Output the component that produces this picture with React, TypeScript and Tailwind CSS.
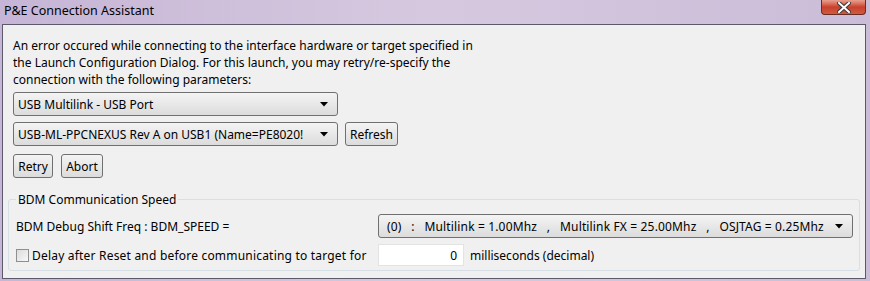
import React from "react";

const font = { fontFamily: '"Noto Sans", "Open Sans", sans-serif' };

function Caret() {
  return (
    <svg width="8" height="5" viewBox="0 0 8 5" className="shrink-0">
      <path d="M0 0 L8 0 L4 4.5 Z" fill="#000" />
    </svg>
  );
}

function Combo({ text, className }: { text: string; className: string }) {
  return (
    <div
      className={`flex items-center h-[24px] rounded-[3px] border border-[#707070] bg-gradient-to-b from-[#f4f4f4] to-[#dcdcdc] pl-[4px] pr-[9px] ${className}`}
    >
      <span className="flex-1 whitespace-pre overflow-hidden text-clip">{text}</span>
      <Caret />
    </div>
  );
}

function Btn({ text, className }: { text: string; className: string }) {
  return (
    <div
      className={`flex items-center justify-center h-[24px] rounded-[3px] border border-[#707070] bg-gradient-to-b from-[#f4f4f4] to-[#dcdcdc] ${className}`}
    >
      {text}
    </div>
  );
}

export default function App() {
  return (
    <div
      className="w-[870px] h-[281px] flex flex-col bg-gradient-to-r from-[#c6b5d6] via-[#d6c9df] to-[#cbbcd8] text-[12px] leading-[17px] text-black"
      style={font}
    >
      <div className="h-[24px] flex items-start justify-between shrink-0">
        <div className="pl-[4px] pt-[2px] text-[12.5px] text-black">P&amp;E Connection Assistant</div>
        <div className="mr-[4px] w-[45px] h-[15px] rounded-b-[4px] border border-t-0 border-[#6b2a22] bg-gradient-to-b from-[#e8a090] via-[#c9402c] to-[#d05a40] flex items-center justify-center">
          <svg width="14" height="11" viewBox="0 0 14 11">
            <path d="M2 1 L12 10 M12 1 L2 10" stroke="#3a3a3a" strokeWidth="4" strokeLinecap="square" />
            <path d="M2 1 L12 10 M12 1 L2 10" stroke="#ffffff" strokeWidth="2" strokeLinecap="square" />
          </svg>
        </div>
      </div>
      <div className="mx-[2px] mr-[4px] h-[255px] border border-[#5a5a6a] bg-[#f0f0f0] flex flex-col pl-[10px] pr-[5px] pt-[12px]">
        <p className="w-[470px]">
          An error occured while connecting to the interface hardware or target specified in the
          Launch Configuration Dialog. For this launch, you may retry/re-specify the connection with
          the following parameters:
        </p>
        <Combo text="USB Multilink - USB Port" className="w-[325px] mt-[4px]" />
        <div className="flex gap-[7px] mt-[6px]">
          <Combo text="USB-ML-PPCNEXUS Rev A on USB1 (Name=PE8020!" className="w-[325px]" />
          <Btn text="Refresh" className="w-[53px]" />
        </div>
        <div className="flex gap-[8px] mt-[8px]">
          <Btn text="Retry" className="w-[40px]" />
          <Btn text="Abort" className="w-[42px]" />
        </div>
        <fieldset className="mt-[13px] ml-[-5px] w-[852px] h-[80px] border border-[#d5dfe5] rounded-[3px] pl-[7px] pr-[6px] pb-0">
          <legend className="px-[2px] ml-[0px]">BDM Communication Speed</legend>
          <div className="flex items-center justify-between h-[24px] mt-[6px]">
            <span>BDM Debug Shift Freq : BDM_SPEED =</span>
            <Combo
              text="(0)   :   Multilink = 1.00Mhz   ,   Multilink FX = 25.00Mhz   ,   OSJTAG = 0.25Mhz"
              className="w-[475px] pl-[8px] tracking-[0.15px]"
            />
          </div>
          <div className="flex items-center justify-between h-[22px] mt-[6px]">
            <div className="flex items-center">
              <div className="w-[13px] h-[13px] border border-[#8f8f8f] bg-gradient-to-br from-[#dcdcdc] to-[#f8f8f8]" />
              <span className="ml-[3px] tracking-[0.2px]">Delay after Reset and before communicating to target for</span>
            </div>
            <div className="w-[475px] flex items-center">
              <div className="w-[86px] h-[22px] bg-white border border-[#e3e3e3] flex items-center justify-end pr-[6px]">0</div>
              <span className="ml-[6px]">milliseconds (decimal)</span>
            </div>
          </div>
        </fieldset>
      </div>
    </div>
  );
}
